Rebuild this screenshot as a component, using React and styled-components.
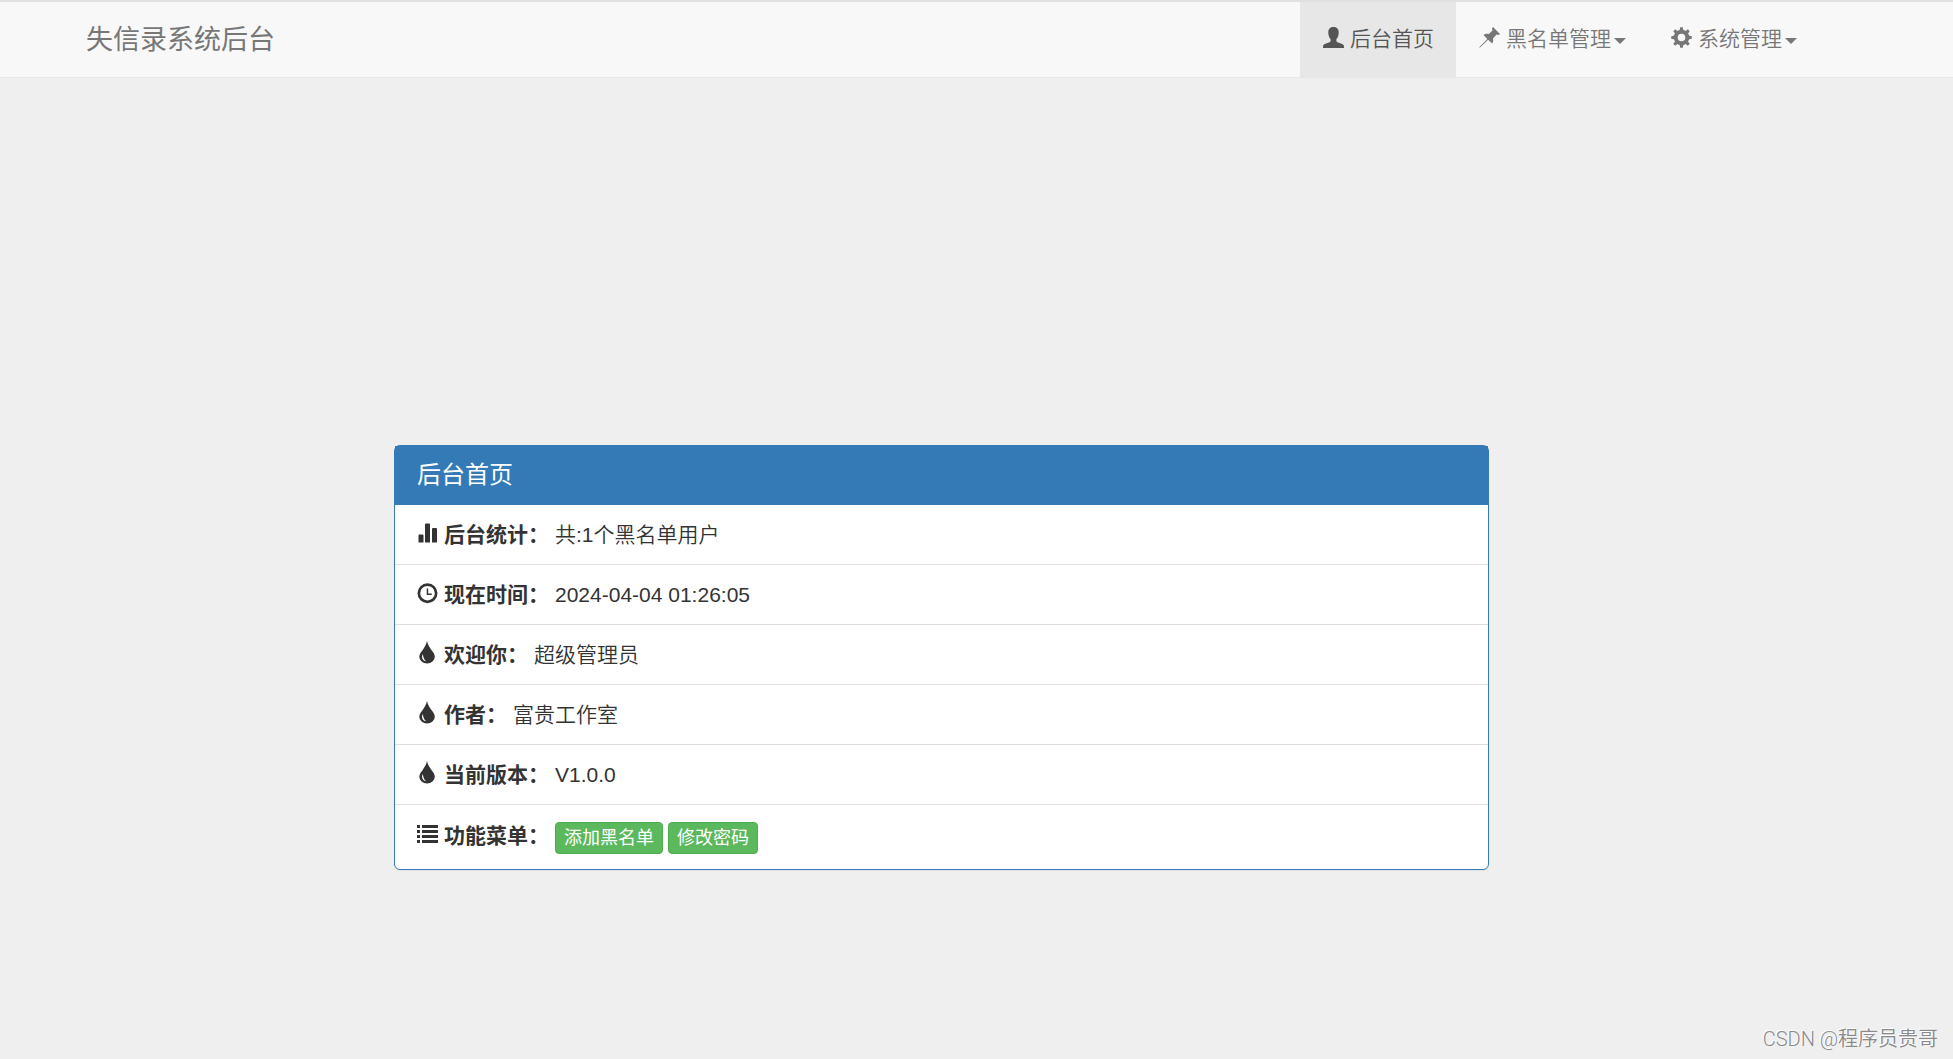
import React from 'react';
import styled, { createGlobalStyle } from 'styled-components';

const GlobalStyle = createGlobalStyle`
  * {
    box-sizing: border-box;
  }

  body {
    margin: 0;
    background: #efefef;
    color: #333;
    font-family: 'Liberation Sans', 'Noto Sans CJK SC', sans-serif;
    font-size: 21px;
    font-weight: 350;
    line-height: 30px;
  }
`;

const Page = styled.div`
  min-height: 100vh;
  display: flex;
  flex-direction: column;
`;

const Navbar = styled.header`
  background: #f8f8f8;
  border-top: 2px solid #e0e0e0;
  border-bottom: 1px solid #e7e7e7;
  padding-right: 70px;
`;

const Container = styled.div`
  width: 100%;
  max-width: 1755px;
  margin: 0 auto;
  display: flex;
  justify-content: space-between;
`;

const Brand = styled.a`
  padding: 23px 22px 22px;
  font-size: 27px;
  font-weight: 400;
  color: #777;
  text-decoration: none;
`;

const Nav = styled.nav`
  display: flex;
`;

const NavLink = styled.a`
  display: flex;
  align-items: flex-start;
  padding: 22px 22px 23px 23px;
  color: ${(props) => (props.$active ? '#555' : '#777')};
  background: ${(props) => (props.$active ? '#e7e7e7' : 'transparent')};
  text-decoration: none;
  white-space: nowrap;
`;

const Icon = styled.svg`
  flex: none;
  width: 21px;
  height: 21px;
  margin-top: 3px;
  margin-right: 6px;
  fill: currentColor;
  overflow: visible;
`;

const Caret = styled.span`
  align-self: center;
  margin-left: 3px;
  margin-top: 4px;
  border-top: 6px solid;
  border-left: 6px solid transparent;
  border-right: 6px solid transparent;
`;

const Main = styled.main`
  padding: 367px 70px 0 0;
`;

const Panel = styled.section`
  width: 92%;
  max-width: 1095px;
  margin: 0 auto;
  background: #fff;
  border: 1px solid #337ab7;
  border-radius: 6px;
  box-shadow: 0 1px 1px rgba(0, 0, 0, 0.05);
`;

const PanelTitle = styled.h3`
  margin: 0;
  padding: 14px 22px 15px;
  background: #337ab7;
  color: #fff;
  font-size: 24px;
  font-weight: 400;
`;

const List = styled.ul`
  list-style: none;
  margin: 0;
  padding: 0;
`;

const Row = styled.li`
  display: flex;
  align-items: flex-start;
  padding: 15px 22px 14px;
  border-bottom: 1px solid #ddd;

  &:last-child {
    padding: 16px 22px 15px;
    border-bottom: none;
  }
`;

const Label = styled.b`
  font-weight: 700;
  margin-right: 6px;
`;

const Actions = styled.div`
  display: flex;
  gap: 5px;
  padding-top: 1px;
`;

const Button = styled.button`
  padding: 0 8px;
  border: 1px solid #4cae4c;
  border-radius: 4px;
  background: #5cb85c;
  color: #fff;
  font-family: inherit;
  font-size: 18px;
  font-weight: 400;
  line-height: 30px;
  cursor: pointer;

  &:hover {
    background: #449d44;
  }
`;

const Credit = styled.footer`
  margin-top: auto;
  padding: 0 15px 5px 0;
  text-align: right;
  font-family: Roboto, 'Noto Sans CJK SC', sans-serif;
  font-size: 20px;
  color: #8a8a8a;
  text-shadow: -1px -1px 0 #fff;
`;

const icons = {
  user: (
    <path d="M10.500 0C7.200 0 5.300 2 5.300 5.200c0 1.200.1 1.800.3 2.700.3 2 1.200 3.200 2 4.200v1.600c0 .8-.4 1.200-1.100 1.500L1.800 17C.6 17.600 0 18.300 0 19.400V21h21v-1.600c0-1.100-.6-1.800-1.800-2.400l-4.700-1.800c-.7-.3-1.100-.7-1.100-1.500v-1.600c.8-1 1.700-2.200 2-4.200.2-.9.3-1.500.3-2.700C15.700 2 13.800 0 10.500 0z" />
  ),
  pushpin: (
    <path d="M14 0l7 7-1.400 1-2-.5-3.700 4c.7 1.800.4 3.400-.8 5l-4-3.800L1.500 20 0 21l1-1.500 7.300-7.400L4.500 8c1.600-1.200 3.200-1.500 5-.8l4-3.700-.5-2z" />
  ),
  cog: (
    <>
      <path
        fillRule="evenodd"
        d="M10.500 2.700a7.800 7.800 0 1 1 0 15.600 7.800 7.800 0 0 1 0-15.600zm0 4a3.800 3.800 0 1 0 0 7.600 3.800 3.800 0 0 0 0-7.600z"
      />
      {[0, 45, 90, 135, 180, 225, 270, 315].map((angle) => (
        <path
          key={angle}
          d="M9.200.2h2.600l.6 3.600H8.600z"
          transform={`rotate(${angle} 10.500 10.500)`}
        />
      ))}
    </>
  ),
  stats: (
    <path d="M2.500 11.500h3a1 1 0 0 1 1 1V19.500H1.500v-7a1 1 0 0 1 1-1zM9 .5h3a1 1 0 0 1 1 1v18H8v-18a1 1 0 0 1 1-1zM16 5h3a1 1 0 0 1 1 1v13.500h-5V6a1 1 0 0 1 1-1z" />
  ),
  time: (
    <path
      fillRule="evenodd"
      d="M10.500.2a10 10 0 1 1 0 20 10 10 0 0 1 0-20zm0 2.700a7.300 7.300 0 1 0 0 14.600 7.300 7.300 0 0 0 0-14.600zM9.700 5.500h1.500v5h3.500V12h-5z"
    />
  ),
  tint: (
    <path
      fillRule="evenodd"
      d="M10-2c.8 4.200 2.900 6.700 4.800 9.400 1.700 2.300 3 3.900 3 6.300a7.700 6.700 0 0 1-15.500 0c0-2.400 1.300-4 3-6.300C7.100 4.700 9.200 2.200 10-2zM5.900 11c-2 3.200-.2 6.900 3.200 7.300-1.900-1.600-3-3.900-3.200-7.300z"
    />
  ),
  list: (
    <path d="M0 1h3v3H0zM5 1h16v3H5zM0 6h3v3H0zM5 6h16v3H5zM0 11h3v3H0zM5 11h16v3H5zM0 16h3v3H0zM5 16h16v3H5z" />
  ),
};

const Glyph = ({ name }) => (
  <Icon viewBox="0 0 21 21" aria-hidden="true">
    {icons[name]}
  </Icon>
);

const navItems = [
  { icon: 'user', text: '后台首页', active: true },
  { icon: 'pushpin', text: '黑名单管理', menu: true },
  { icon: 'cog', text: '系统管理', menu: true },
];

const rows = [
  { icon: 'stats', label: '后台统计：', value: '共:1个黑名单用户' },
  { icon: 'time', label: '现在时间：', value: '2024-04-04 01:26:05' },
  { icon: 'tint', label: '欢迎你：', value: '超级管理员' },
  { icon: 'tint', label: '作者：', value: '富贵工作室' },
  { icon: 'tint', label: '当前版本：', value: 'V1.0.0' },
];

const App = () => {
  return (
    <Page>
      <GlobalStyle />
      <Navbar>
        <Container>
          <Brand href="#">失信录系统后台</Brand>
          <Nav>
            {navItems.map((item) => (
              <NavLink key={item.text} href="#" $active={item.active}>
                <Glyph name={item.icon} />
                {item.text}
                {item.menu && <Caret />}
              </NavLink>
            ))}
          </Nav>
        </Container>
      </Navbar>
      <Main>
        <Panel>
          <PanelTitle>后台首页</PanelTitle>
          <List>
            {rows.map((row) => (
              <Row key={row.label}>
                <Glyph name={row.icon} />
                <Label>{row.label}</Label>
                <span>{row.value}</span>
              </Row>
            ))}
            <Row>
              <Glyph name="list" />
              <Label>功能菜单：</Label>
              <Actions>
                <Button type="button">添加黑名单</Button>
                <Button type="button">修改密码</Button>
              </Actions>
            </Row>
          </List>
        </Panel>
      </Main>
      <Credit>CSDN @程序员贵哥</Credit>
    </Page>
  );
};

export default App;
